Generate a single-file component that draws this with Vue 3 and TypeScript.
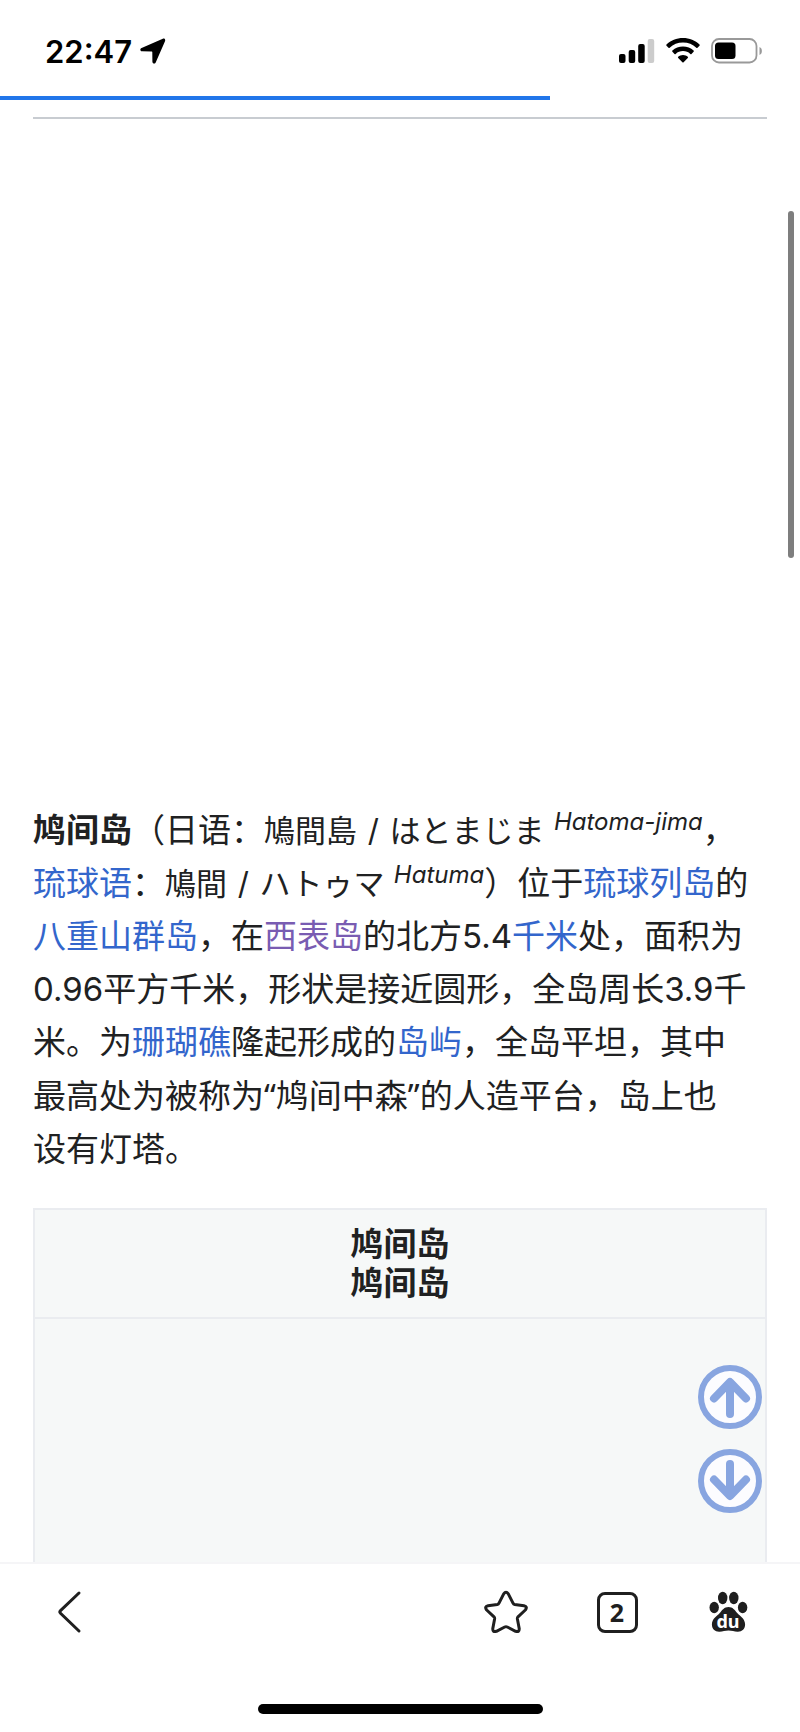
<script setup lang="ts">
import { ref } from 'vue'

const time = '22:47'
const title = '鸠间岛'
const progress = 68.75
const openTabs = ref(2)
const page = ref<HTMLElement | null>(null)

function jump(toTop: boolean): void {
  const el = page.value
  if (el) el.scrollTo({ top: toTop ? 0 : el.scrollHeight, behavior: 'smooth' })
}
</script>

<template>
  <div class="screen">
    <header class="status">
      <div class="clock">
        <time>{{ time }}</time>
        <svg width="26" height="26" viewBox="0 0 26 26" aria-hidden="true">
          <path d="M22.8 .8 1.6 9.9C-.3 10.8 0 13.2 2 13.3l9.5.1c.6 0 .8.2.8.8l.1 9.6c.1 2.1 2.4 2.500 3.300.6L25 3.200C25.700 1.400 24.400.1 22.800.8z" />
        </svg>
      </div>
      <div class="signals">
        <svg width="36" height="26" viewBox="0 0 36 26" aria-label="信号">
          <rect x="0" y="16" width="6.5" height="9" rx="2" />
          <rect x="9.7" y="12" width="6.5" height="13" rx="2" />
          <rect x="19.2" y="6" width="6.5" height="19" rx="2" />
          <rect x="28.7" y="1" width="6.5" height="24" rx="2" fill="#ccc" />
        </svg>
        <svg width="34" height="26" viewBox="0 0 34 26" aria-label="无线网络">
          <path d="M17 0C10.500 0 4.700 2.500.500 6.500c-.4.400-.4.800 0 1.200l2 2c.4.400.8.400 1.200 0C7.200 6.400 11.800 4.500 17 4.500s9.800 1.900 13.300 5.200c.4.400.8.400 1.200 0l2-2c.4-.4.4-.8 0-1.200C29.300 2.500 23.500 0 17 0z" />
          <path d="M17 8.500c-4.100 0-7.800 1.500-10.600 4.100-.4.400-.4.800 0 1.200l2.100 2.100c.4.400.8.400 1.200 0 1.900-1.800 4.500-2.800 7.300-2.800s5.400 1 7.300 2.800c.4.400.8.400 1.200 0l2.100-2.100c.4-.4.4-.8 0-1.200C24.800 10 21.100 8.500 17 8.500z" />
          <path d="M17 17c-1.900 0-3.600.7-4.800 1.800-.4.400-.4.800 0 1.200l4.200 4.300c.4.400.8.400 1.200 0l4.200-4.300c.4-.4.4-.8 0-1.200C20.600 17.700 18.900 17 17 17z" />
        </svg>
        <svg width="52" height="26" viewBox="0 0 52 26" aria-label="电池">
          <rect x="1" y="1" width="44.500" height="23.500" rx="7" fill="none" stroke="#999" stroke-width="1.800" />
          <rect x="4" y="4.500" width="20.500" height="16.500" rx="3.500" />
          <path d="M48.500 9v8c3.200-1.200 3.200-6.800 0-8z" fill="#999" />
        </svg>
      </div>
    </header>

    <div class="progress" role="progressbar" :aria-valuenow="progress">
      <div class="progress-fill" :style="{ width: progress + '%' }"></div>
    </div>

    <main ref="page" class="page">
      <div class="media"></div>

      <p class="intro">
        <b>{{ title }}</b>（日语：<span lang="ja" class="ja">鳩間島 <i class="slash">/</i> はとまじま</span> <sup>Hatoma-jima</sup>，<br />
        <a href="#ryukyuan">琉球语</a>：<span lang="ja" class="ja">鳩間 <i class="slash">/</i> ハトゥマ</span> <sup>Hatuma</sup>）位于<a href="#ryukyu">琉球列岛</a>的<a href="#yaeyama">八重山群岛</a>，在<a href="#iriomote" class="visited">西表岛</a>的北方5.4<a href="#km">千米</a>处，面积为0.96平方千米，形状是接近圆形，全岛周长3.9千米。为<a href="#coral">珊瑚礁</a>隆起形成的<a href="#island">岛屿</a>，全岛平坦，其中<br />最高处为被称为<span class="quote">“</span>鸠间中森<span class="quote">”</span>的人造平台，岛上也<br />设有灯塔。
      </p>

      <table class="infobox">
        <thead>
          <tr><th scope="col">{{ title }}<br />{{ title }}</th></tr>
        </thead>
        <tbody>
          <tr><td></td></tr>
        </tbody>
      </table>

      <div class="scroll-thumb"></div>

      <div class="jumps">
        <button type="button" aria-label="回到顶部" @click="jump(true)">
          <svg viewBox="0 0 64 64">
            <circle cx="32" cy="32" r="29" />
            <path d="M32 49V18M16 33.500 32 17l16 16.500" />
          </svg>
        </button>
        <button type="button" aria-label="跳到底部" @click="jump(false)">
          <svg viewBox="0 0 64 64">
            <circle cx="32" cy="32" r="29" />
            <path d="M32 15v31M16 30.500 32 47l16-16.500" />
          </svg>
        </button>
      </div>
    </main>

    <footer class="toolbar">
      <nav class="tools">
        <button type="button" class="tool back" aria-label="返回">
          <svg width="48" height="48" viewBox="0 0 48 48">
            <path d="M34 5 15.500 22.700q-1.300 1.300 0 2.600L34 43" />
          </svg>
        </button>
        <button type="button" class="tool" aria-label="收藏">
          <svg width="48" height="48" viewBox="0 0 48 48">
            <path d="M21.700 5.800Q24 2.700 26.300 5.800L31 15.200Q31.500 16.300 32.700 16.500L42 17.800Q45.900 18.600 43.300 22L36 28.900Q35.200 29.700 35.400 31L37.200 40.500Q37.500 44.500 33.600 43.300L25.300 39Q24 38.300 22.700 39L14.400 43.300Q10.500 44.500 10.800 40.500L12.600 31Q12.800 29.700 12 28.900L4.700 22Q2.100 18.600 6 17.800L15.300 16.500Q16.500 16.300 17 15.200Z" />
          </svg>
        </button>
        <button type="button" class="tool" aria-label="标签页">
          <span class="tabs">{{ openTabs }}</span>
        </button>
        <button type="button" class="tool" aria-label="百度">
          <svg class="paw" width="48" height="48" viewBox="0 0 48 48">
            <ellipse cx="10.200" cy="19.500" rx="4.700" ry="5.800" />
            <ellipse cx="18.700" cy="10" rx="4.700" ry="6.200" />
            <ellipse cx="29.800" cy="10" rx="4.700" ry="6.200" />
            <ellipse cx="38.600" cy="19.500" rx="4.700" ry="5.800" />
            <path d="M24.500 19c-4.200 0-6.300 3-8.700 6-2.800 3.300-7.900 5.500-7.900 11.500 0 4.500 3.200 7.400 7.600 7.200 3.500-.2 5.500-1.200 9-1.200s5.500 1 9 1.200c4.400.2 7.600-2.700 7.600-7.200 0-6-5.100-8.200-7.900-11.500-2.400-3-4.500-6-8.700-6z" />
            <text x="24" y="40" text-anchor="middle">du</text>
          </svg>
        </button>
      </nav>
      <div class="home-bar"></div>
    </footer>
  </div>
</template>

<style>
body {
  margin: 0;
  background: #fff;
}
</style>

<style scoped>
.screen {
  display: flex;
  flex-direction: column;
  height: 100vh;
  background: #fff;
  color: #202122;
  font-family: Inter, "Noto Sans CJK SC", sans-serif;
}

.status {
  display: flex;
  justify-content: space-between;
  align-items: center;
  height: 96px;
  padding: 6px 37px 0 45px;
  box-sizing: border-box;
  color: #000;
}

.clock {
  display: flex;
  align-items: center;
  gap: 8px;
  font-size: 31px;
  font-weight: 600;
}

.signals {
  display: flex;
  align-items: center;
  gap: 11px;
}

.progress {
  height: 4px;
}

.progress-fill {
  height: 100%;
  background: #2176ea;
}

.page {
  position: relative;
  flex: 1;
  min-height: 0;
  display: flex;
  flex-direction: column;
  padding: 17px 33px 0;
  overflow: hidden;
}

.media {
  flex: none;
  height: 685px;
  border-top: 2px solid #c8ccd1;
}

.intro {
  margin: 0 0 32px;
  font-size: 33px;
  line-height: 53px;
}

.intro a {
  color: #36c;
  text-decoration: none;
}

.intro a.visited {
  color: #795cb2;
}

.ja {
  font-family: Inter, "Noto Sans CJK JP", sans-serif;
  font-size: 31px;
}

.slash {
  margin: 0 2px;
  font-style: normal;
}

.quote {
  font-family: "Noto Sans", sans-serif;
}

.intro sup {
  font-size: 24px;
  font-style: italic;
  line-height: 1;
}

.infobox {
  flex: 1;
  display: flex;
  flex-direction: column;
  border: 2px solid #eaecf0;
  border-bottom: 0;
  background: #f6f8f8;
}

.infobox thead,
.infobox tr,
.infobox th {
  display: block;
}

.infobox th {
  padding: 15px 8px 14px;
  border-bottom: 2px solid #eaecf0;
  font-size: 33px;
  font-weight: 700;
  line-height: 39px;
}

.scroll-thumb {
  position: absolute;
  top: 111px;
  right: 6px;
  width: 6px;
  height: 347px;
  border-radius: 3px;
  background: #7e7e7e;
}

.jumps {
  position: absolute;
  right: 38px;
  bottom: 49px;
  display: flex;
  flex-direction: column;
  gap: 20px;
}

.jumps button {
  width: 64px;
  height: 64px;
  padding: 0;
  border: 0;
  background: none;
}

.jumps svg {
  display: block;
  fill: none;
  stroke: #88a5e0;
}

.jumps circle {
  fill: #fcfcff;
  stroke-width: 6;
}

.jumps path {
  stroke-width: 8;
  stroke-linecap: round;
  stroke-linejoin: round;
}

.toolbar {
  height: 170px;
  box-sizing: border-box;
  border-top: 2px solid #f5f5f7;
  display: flex;
  flex-direction: column;
  align-items: center;
  justify-content: space-between;
  padding: 24px 0 18px;
}

.tools {
  display: flex;
  align-self: stretch;
  gap: 63px;
  padding: 0 48px 0 45px;
}

.tool {
  display: flex;
  align-items: center;
  justify-content: center;
  width: 48px;
  height: 48px;
  padding: 0;
  border: 0;
  background: none;
  color: #1f1f1f;
}

.back {
  margin-right: auto;
}

.tool svg {
  fill: none;
  stroke: #1f1f1f;
  stroke-width: 3;
  stroke-linecap: round;
  stroke-linejoin: round;
}

.tool .paw {
  fill: #1f1f1f;
  stroke: none;
}

.paw text {
  fill: #fff;
  font: 700 18px "Noto Sans", sans-serif;
}

.tabs {
  display: flex;
  align-items: center;
  justify-content: center;
  width: 41px;
  height: 41px;
  box-sizing: border-box;
  border: 3px solid #1f1f1f;
  border-radius: 8px;
  font: 700 25px "Noto Sans", sans-serif;
}

.home-bar {
  width: 36%;
  max-width: 285px;
  height: 10px;
  border-radius: 5px;
  background: #000;
}
</style>
